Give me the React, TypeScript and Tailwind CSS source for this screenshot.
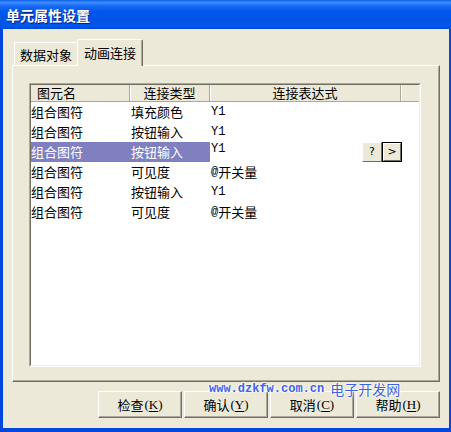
import React from "react";

const rows: [string, string, string][] = [
  ["组合图符", "填充颜色", "Y1"],
  ["组合图符", "按钮输入", "Y1"],
  ["组合图符", "按钮输入", "Y1"],
  ["组合图符", "可见度", "@开关量"],
  ["组合图符", "按钮输入", "Y1"],
  ["组合图符", "可见度", "@开关量"],
];

function Expr({ v }: { v: string }) {
  if (v.startsWith("@")) {
    return (
      <span className="flex items-center">
        <span className="font-['Liberation_Mono',monospace] text-[12px] leading-[13px]">@</span>
        <span className="text-[13px] leading-[14px]">开关量</span>
      </span>
    );
  }
  return <span className="font-['Liberation_Mono',monospace] text-[12px] leading-[13px]">{v}</span>;
}

function Btn({ label, k }: { label: string; k: string }) {
  return (
    <div className="w-[84px] h-[27px] flex items-center justify-center bg-[#ECE9D8] border-t border-l border-white border-b border-r border-b-[#716F64] border-r-[#716F64] shadow-[inset_-1px_-1px_0_#ACA899] text-[13px] leading-[14px] text-black">
      <span>{label}</span>
      <span className="font-['Liberation_Serif',serif] text-[13px] leading-[14px] ml-[1px]">
        (<span className="underline underline-offset-2">{k}</span>)
      </span>
    </div>
  );
}

export default function App() {
  return (
    <div className="relative w-[451px] h-[432px] flex flex-col bg-[#0347DE] font-['Noto_Sans_CJK_SC',sans-serif] overflow-hidden">
      {/* title bar */}
      <div className="h-[29px] flex items-center pl-[6px] bg-[linear-gradient(to_bottom,#0A5CE6_0%,#3D8FFF_8%,#1A6BF5_20%,#0058EE_40%,#0054E3_70%,#0057EB_90%,#0048D8_100%)]">
        <span className="text-white font-bold text-[14px] leading-[16px] [text-shadow:1px_1px_0_#0A1E8A]">单元属性设置</span>
      </div>
      {/* body */}
      <div className="ml-[3px] mr-[2px] mb-[4px] flex-1 bg-[#ECE9D8] pt-[10px] px-[9px] pb-[10px] flex flex-col">
        {/* tabs */}
        <div className="h-[26px] flex items-end pl-[2px]">
          <div className="w-[63px] h-[23px] flex items-center justify-center border-t border-l border-white rounded-tl-[2px] text-[13px] leading-[14px] text-black pt-[1px]">
            数据对象
          </div>
          <div className="relative z-10 -mb-px w-[66px] h-[27px] flex items-center justify-center bg-[#ECE9D8] border-t border-l border-white border-r border-r-[#716F64] rounded-t-[2px] shadow-[inset_-1px_0_0_#ACA899] text-[13px] leading-[14px] text-black pb-[1px]">
            动画连接
          </div>
        </div>
        {/* panel */}
        <div className="h-[317px] border-t border-l border-white border-r border-b border-r-[#716F64] border-b-[#716F64] shadow-[inset_-1px_-1px_0_#ACA899] pl-[16px] pt-[17px]">
          <div className="w-[392px] h-[284px] border-t border-l border-[#ACA899] border-b border-r border-b-white border-r-white">
            <div className="relative w-full h-full bg-white border-t border-l border-[#716F64] border-b border-r border-b-[#F1EFE2] border-r-[#F1EFE2]">
              {/* header */}
              <div className="h-[17px] flex bg-[#ECE9D8] border-b border-[#ACA899] text-[13px] leading-[14px] text-black">
                <div className="w-[99px] flex items-center pl-[6px] border-r border-[#ACA899]">图元名</div>
                <div className="w-[80px] flex items-center justify-center border-r border-[#ACA899] shadow-[inset_1px_0_0_white]">连接类型</div>
                <div className="w-[191px] flex items-center justify-center border-r border-[#ACA899] shadow-[inset_1px_0_0_white]">连接表达式</div>
                <div className="flex-1 shadow-[inset_1px_0_0_white]"></div>
              </div>
              {/* rows */}
              {rows.map((r, i) => {
                const sel = i === 2;
                return (
                  <div key={i} className="h-[20px] flex text-[13px] leading-[14px] text-black">
                    <div className={`w-[99px] flex items-center ${sel ? "bg-[#8080C0] text-white" : ""}`}>{r[0]}</div>
                    <div className={`w-[80px] flex items-center pl-[1px] ${sel ? "bg-[#8080C0] text-white" : ""}`}>{r[1]}</div>
                    <div className={`w-[191px] flex pl-[1px] ${sel ? "items-start pt-[1px]" : "items-center"}`}>
                      <Expr v={r[2]} />
                    </div>
                  </div>
                );
              })}
              {/* inline buttons */}
              <div className="absolute left-[331px] top-[57px] flex">
                <div className="w-[20px] h-[20px] flex items-center justify-center bg-[#ECE9D8] border-t border-l border-white border-b border-r border-b-[#716F64] border-r-[#716F64] font-['DejaVu_Sans',sans-serif] text-[11px] leading-[12px] text-black">
                  ?
                </div>
                <div className="w-[20px] h-[20px] border border-black">
                  <div className="w-full h-full flex items-center justify-center bg-[#ECE9D8] border-t border-l border-white border-b border-r border-b-[#716F64] border-r-[#716F64] font-['DejaVu_Sans',sans-serif] text-[11px] leading-[12px] text-black">
                    &gt;
                  </div>
                </div>
              </div>
            </div>
          </div>
        </div>
        {/* buttons */}
        <div className="mt-[9px] h-[27px] flex justify-end gap-[2px]">
          <Btn label="检查" k="K" />
          <Btn label="确认" k="Y" />
          <Btn label="取消" k="C" />
          <Btn label="帮助" k="H" />
        </div>
      </div>
      {/* watermark */}
      <div className="absolute left-[209px] top-[382px] flex items-center text-[#3F62EA] [text-shadow:0_0_2px_white,0_0_2px_white,0_0_3px_white]">
        <span className="font-['Liberation_Mono',monospace] font-bold text-[12px] leading-[13px]">www.dzkfw.com.cn</span>
        <span className="ml-[6px] text-[14px] leading-[14px]">电子开发网</span>
      </div>
    </div>
  );
}
